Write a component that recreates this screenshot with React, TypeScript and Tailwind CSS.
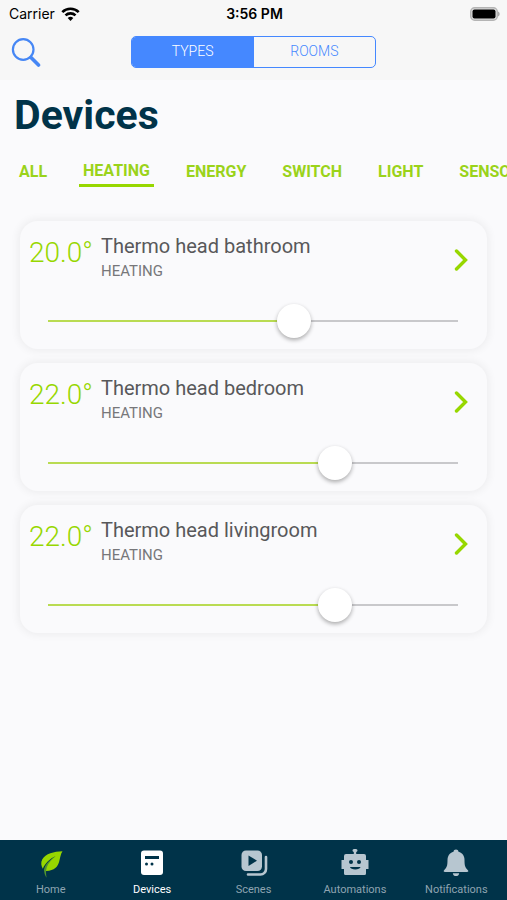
import { useState, type ReactNode } from "react";

const TABS = ["ALL", "HEATING", "ENERGY", "SWITCH", "LIGHT", "SENSORS"];
const DEVICES = [
  { name: "Thermo head bathroom", kind: "HEATING", temp: 20 },
  { name: "Thermo head bedroom", kind: "HEATING", temp: 22 },
  { name: "Thermo head livingroom", kind: "HEATING", temp: 22 },
];
const MIN = 8;
const MAX = 28;

function StatusBar() {
  return (
    <div className="grid h-7 grid-cols-3 items-center pl-[9px] pr-[7px] font-['Inter',sans-serif] text-sm text-black">
      <div className="flex items-center gap-[6px]">
        <span>Carrier</span>
        <svg width="19" height="14" viewBox="0 0 19 14" fill="none" stroke="#000" strokeWidth="2.6" aria-hidden="true">
          <path d="M1.3 5.2a11.6 11.6 0 0 1 16.4 0" />
          <path d="M4.5 8.4a7.1 7.1 0 0 1 10 0" />
          <path d="M9.5 14 6.7 11a4 4 0 0 1 5.6 0Z" fill="#000" stroke="none" />
        </svg>
      </div>
      <span className="text-center font-semibold">3:56 PM</span>
      <svg className="justify-self-end" width="31" height="14" viewBox="0 0 31 14" aria-hidden="true">
        <rect x="1.7" y=".7" width="26.600" height="12.600" rx="4" fill="#dedede" stroke="#b4b4b4" strokeWidth="1.400" />
        <rect x="3.500" y="2.500" width="23" height="9" rx="2" fill="#000" />
        <path d="M29 4.500c2.200.8 2.200 4.200 0 5Z" fill="#aaa" />
      </svg>
    </div>
  );
}

function DeviceCard({ name, kind, temp }: { name: string; kind: string; temp: number }) {
  const [value, setValue] = useState(temp);
  return (
    <article className="flex h-32 flex-col justify-between rounded-[18px] bg-[#fafafc] pb-[11px] pr-3 pt-3 shadow-[0_0_8px_2px_rgba(0,0,0,0.055)]">
      <div className="flex items-start pl-[9px]">
        <span className="w-[72px] whitespace-nowrap text-[28px] font-light leading-10 text-[#97d700]">{value.toFixed(1)}°</span>
        <div className="min-w-0 flex-1">
          <h2 className="text-xl leading-[26px] text-[#58585a]">{name}</h2>
          <p className="text-[15px] leading-6 text-[#77777a]">{kind}</p>
        </div>
        <button type="button" aria-label={`Open ${name}`} className="mt-4 flex w-7 justify-center">
          <svg width="14" height="22" viewBox="0 0 14 22" fill="none" stroke="#97d700" strokeWidth="3.4" strokeLinecap="round">
            <path d="m2.500 2 9 9-9 9" />
          </svg>
        </button>
      </div>
      <div className="grid items-center pl-[11px]">
        <span className="col-start-1 row-start-1 mx-[17px] h-[2px] bg-[#c8c8cb]">
          <span className="block h-full bg-[#b9db52]" style={{ width: `${((value - MIN) / (MAX - MIN)) * 100}%` }} />
        </span>
        <input
          type="range"
          aria-label={`${name} temperature`}
          min={MIN}
          max={MAX}
          step={0.5}
          value={value}
          onChange={(e) => setValue(Number(e.target.value))}
          className="col-start-1 row-start-1 h-[34px] w-full cursor-pointer appearance-none bg-transparent [&::-webkit-slider-thumb]:size-[34px] [&::-webkit-slider-thumb]:appearance-none [&::-webkit-slider-thumb]:rounded-full [&::-webkit-slider-thumb]:bg-white [&::-webkit-slider-thumb]:shadow-[0_2px_4px_rgba(0,0,0,0.32)]"
        />
      </div>
    </article>
  );
}

function NavItem({ label, active, children }: { label: string; active?: boolean; children: ReactNode }) {
  return (
    <a href="#" aria-current={active ? "page" : undefined} className={`flex flex-1 flex-col items-center gap-1 pt-2 text-[11px] leading-4 ${active ? "text-white" : "text-[#8fa4b1]"}`}>
      <svg width="32" height="30" viewBox="0 0 32 30" aria-hidden="true">
        {children}
      </svg>
      <span>{label}</span>
    </a>
  );
}

export default function App() {
  const [tab, setTab] = useState("HEATING");
  const [view, setView] = useState("TYPES");
  return (
    <div className="flex min-h-screen flex-col bg-[#fafafc] font-['Roboto',sans-serif]">
      <header className="bg-[#f7f7f7] pb-3">
        <StatusBar />
        <div className="grid grid-cols-[1fr_2fr_1fr] items-center pt-2">
          <button type="button" aria-label="Search" className="w-fit pl-[11px]">
            <svg width="30" height="30" viewBox="0 0 30 30" fill="none" stroke="#4687f5">
              <circle cx="12.2" cy="12.5" r="10.3" strokeWidth="2.2" />
              <path d="m20 20.5 7.5 7.5" strokeWidth="3.6" strokeLinecap="round" />
            </svg>
          </button>
          <div className="mx-1 flex h-8 overflow-hidden rounded-[5px] border border-[#4588ff]">
            {["TYPES", "ROOMS"].map((v) => (
              <button
                key={v}
                type="button"
                aria-pressed={view === v}
                onClick={() => setView(v)}
                className={`flex-1 pb-[2px] text-sm font-light ${view === v ? "bg-[#4588ff] text-white" : "text-[#4588ff]"}`}
              >
                {v}
              </button>
            ))}
          </div>
        </div>
      </header>

      <main className="flex-1">
        <h1 className="px-[14px] pt-2 text-[41px] font-bold leading-[54px] text-[#003349]">Devices</h1>
        <nav aria-label="Device types" className="flex items-start gap-7 overflow-x-auto pl-[15px] pt-3 [scrollbar-width:none]">
          {TABS.map((t) => (
            <button
              key={t}
              type="button"
              aria-pressed={tab === t}
              onClick={() => setTab(t)}
              className={`shrink-0 px-1 pt-1 text-base font-bold text-[#9ad31a] ${tab === t ? "border-b-3 border-[#97d700] leading-[26px]" : "leading-7"}`}
            >
              {t}
            </button>
          ))}
        </nav>
        <section className="flex flex-col gap-[14px] px-5 pb-6 pt-[34px]">
          {DEVICES.map((d) => (
            <DeviceCard key={d.name} {...d} />
          ))}
        </section>
      </main>

      <nav aria-label="Main" className="flex h-[60px] bg-[#003349]">
        <NavItem label="Home">
          <path d="M27.500 3.200C19 3.500 10.500 5.500 7.200 11.500c-1.600 3-1 6.400.6 9.200C10 15.500 14.500 11 20.500 8.300 14.500 12.500 10.200 17.500 9.300 22.800c9.500.8 13.600-4 14.900-9.300C25.200 9.800 25.500 6.200 27.500 3.200Z" fill="#97d700" />
          <path d="M20.500 8.300C13.500 12.500 8.600 18.200 9.200 23.500c.3 2.300 1 4.500 2.400 6.200-.7-3.700-.9-7.200.2-10.500C13.200 15.200 16.500 11.500 20.500 8.300Z" fill="#4f9230" />
        </NavItem>
        <NavItem label="Devices" active>
          <rect x="5" y="2.500" width="22" height="24.500" rx="3" fill="#fff" />
          <rect x="9" y="8" width="14" height="3" fill="#003349" />
          <circle cx="10.500" cy="16" r="1.500" fill="#003349" />
          <circle cx="16" cy="16" r="1.500" fill="#003349" />
        </NavItem>
        <NavItem label="Scenes">
          <rect x="3.500" y="2.500" width="20.500" height="20.500" rx="4.500" fill="#b7c6d0" />
          <path d="m10.500 7.500 8.500 5.200-8.500 5.300Z" fill="#003349" />
          <path d="M28 9v12a5.500 5.500 0 0 1-5.500 5.500H10" fill="none" stroke="#b7c6d0" strokeWidth="2.600" strokeLinecap="round" />
        </NavItem>
        <NavItem label="Automations">
          <path d="M13.500 2.300c0-1.800 5-1.800 5 0 0 .9-.6 1.500-1.300 1.800V6H25a2 2 0 0 1 2 2v4h2.500v9H27v4.500a1.500 1.500 0 0 1-1.500 1.500h-19A1.500 1.500 0 0 1 5 25.500V21H2.500v-9H5V8a2 2 0 0 1 2-2h7.800V4.100c-.7-.3-1.300-.9-1.300-1.800Z" fill="#b7c6d0" />
          <circle cx="12" cy="14" r="2" fill="#003349" />
          <circle cx="20" cy="14" r="2" fill="#003349" />
          <path d="M11 19h10.500c-.3 3.300-10.200 3.300-10.500 0Z" fill="#003349" />
        </NavItem>
        <NavItem label="Notifications">
          <path d="M16 1.500c1.400 0 2.300.9 2.500 2.200 4 1.200 6 4.300 6 8.300 0 6 .8 7.500 3.200 10 1.200 1.200.5 2-.7 2H5c-1.200 0-1.900-.8-.7-2 2.400-2.500 3.200-4 3.200-10 0-4 2-7.100 6-8.300.2-1.300 1.100-2.200 2.500-2.200ZM12.800 25.200h6.400c-.3 3.800-6.100 3.800-6.400 0Z" fill="#b7c6d0" />
        </NavItem>
      </nav>
    </div>
  );
}
